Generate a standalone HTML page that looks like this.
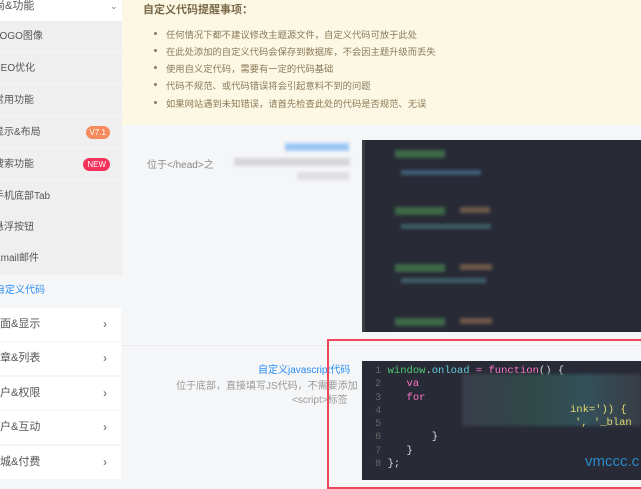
<!DOCTYPE html>
<html><head><meta charset="utf-8"><style>
*{margin:0;padding:0;box-sizing:border-box}
body{width:641px;height:480px;overflow:hidden;position:relative;background:#f5f6f8;font-family:"Liberation Sans","Noto Sans CJK SC",sans-serif;font-size:10px;color:#555}
.abs{position:absolute}
.side{left:0;top:0;width:122px;height:480px;background:#f5f6f8;overflow:hidden}
.sub{position:absolute;left:0;width:122px;height:31px;background:#efeff0;color:#555;font-size:10px;line-height:31px;text-indent:-6px}
.m{position:absolute;left:0;width:121px;height:33px;background:#fff;font-size:11px;color:#555;line-height:33px;text-indent:-11px}
.m:after{content:"›";position:absolute;right:7px;top:0;font-size:12px;font-weight:bold;color:#888}
.badge{position:absolute;right:12px;top:9px;height:13px;line-height:13px;padding:0 4px;border-radius:7px;color:#fff;font-size:8px;text-indent:0}
.notice{left:122px;top:0;width:519px;height:125px;background:#fdf8e4;color:#8a7a5a}
.notice h4{position:absolute;left:21px;top:1px;font-size:11px;color:#7a6a4a;font-weight:bold}
.notice li{position:absolute;left:44px;font-size:9.3px;list-style:none;white-space:nowrap}
.notice li:before{content:"";position:absolute;left:-12px;top:5px;width:3px;height:3px;background:#8a7a5a;border-radius:50%}
.code{background:#282a36}
.blur{filter:blur(1.5px)}
.mono{font-family:"Liberation Mono",monospace;font-size:10.5px;line-height:13.3px}
</style></head><body>
<div class="abs side">
 <div class="abs" style="left:0;top:0;width:122px;height:21px;background:#fff;font-size:11px;line-height:12px;color:#555;text-indent:-6px">尚&amp;功能<span class="abs" style="left:110px;top:0;font-size:9px;text-indent:0;color:#777">⌄</span></div>
 <div class="sub" style="top:21px">LOGO图像</div>
 <div class="sub" style="top:53px">SEO优化</div>
 <div class="sub" style="top:85px">常用功能</div>
 <div class="sub" style="top:117px">显示&amp;布局<span class="badge" style="background:#f78a5c">V7.1</span></div>
 <div class="sub" style="top:149px">搜索功能<span class="badge" style="background:#f5325c">NEW</span></div>
 <div class="sub" style="top:181px">手机底部Tab</div>
 <div class="sub" style="top:212px">悬浮按钮</div>
 <div class="sub" style="top:243px;height:32px">Email邮件</div>
 <div class="abs" style="left:0;top:275px;width:122px;height:32px;line-height:32px;color:#2a8cf0;font-size:10px;text-indent:-5px">自定义代码</div>
 <div class="m" style="top:308px">页面&amp;显示</div>
 <div class="m" style="top:342px">文章&amp;列表</div>
 <div class="m" style="top:377px">用户&amp;权限</div>
 <div class="m" style="top:411px">用户&amp;互动</div>
 <div class="m" style="top:446px">商城&amp;付费</div>
</div>
<div class="abs notice">
 <h4>自定义代码提醒事项：</h4>
 <ul>
 <li style="top:27px">任何情况下都不建议修改主题源文件，自定义代码可放于此处</li>
 <li style="top:44px">在此处添加的自定义代码会保存到数据库，不会因主题升级而丢失</li>
 <li style="top:61px">使用自义定代码，需要有一定的代码基础</li>
 <li style="top:78px">代码不规范、或代码错误将会引起意料不到的问题</li>
 <li style="top:96px">如果网站遇到未知错误，请首先检查此处的代码是否规范、无误</li>
 </ul>
</div>
<div class="abs blur" style="left:285px;top:143px;width:64px;height:8px;background:#9cc8f5"></div>
<div class="abs" style="left:147px;top:156px;font-size:10px;color:#888">位于&lt;/head&gt;之</div>
<div class="abs blur" style="left:234px;top:158px;width:116px;height:8px;background:#d6d6d8"></div>
<div class="abs blur" style="left:297px;top:172px;width:52px;height:8px;background:#dedee0"></div>
<div class="abs code" style="left:362px;top:140px;width:279px;height:192px;border-left:3px solid #3a3c46">
 <div class="blur" style="position:absolute;left:30px;top:10px;width:50px;height:8px;background:#3e6a48"></div>
 <div class="blur" style="position:absolute;left:36px;top:30px;width:80px;height:5px;background:#3f5e78"></div>
 <div class="blur" style="position:absolute;left:30px;top:67px;width:50px;height:8px;background:#3e6a48"></div>
 <div class="blur" style="position:absolute;left:95px;top:67px;width:30px;height:6px;background:#6e5a4a"></div>
 <div class="blur" style="position:absolute;left:36px;top:84px;width:90px;height:5px;background:#3f5e68"></div>
 <div class="blur" style="position:absolute;left:30px;top:124px;width:50px;height:8px;background:#3e6a48"></div>
 <div class="blur" style="position:absolute;left:95px;top:124px;width:32px;height:6px;background:#6e5a4a"></div>
 <div class="blur" style="position:absolute;left:36px;top:138px;width:85px;height:5px;background:#3f5e68"></div>
 <div class="blur" style="position:absolute;left:30px;top:178px;width:50px;height:8px;background:#3e6a48"></div>
 <div class="blur" style="position:absolute;left:95px;top:178px;width:32px;height:6px;background:#6e5a4a"></div>
</div>
<div class="abs" style="left:122px;top:345px;width:519px;height:1px;background:#ebebed"></div>
<div class="abs" style="left:258px;top:361px;font-size:10px;color:#2a8cf0">自定义javascript代码</div>
<div class="abs" style="left:176px;top:377px;font-size:10px;color:#999">位于底部，直接填写JS代码，不需要添加</div>
<div class="abs" style="left:292px;top:391px;font-size:10px;color:#999">&lt;script&gt;标签</div>
<div class="abs code mono" style="left:362px;top:361px;width:279px;height:119px;padding:4px 0 0 13px;color:#ddd">
<div><span style="color:#666">1</span> <span style="color:#50c878">window</span>.<span style="color:#6cd">onload</span> <span style="color:#f7c">=</span> <span style="color:#f7c">function</span>() {</div>
<div><span style="color:#666">2</span> &nbsp;&nbsp;&nbsp;<span style="color:#f7c">va</span></div>
<div><span style="color:#666">3</span> &nbsp;&nbsp;&nbsp;<span style="color:#f7c">for</span></div>
<div><span style="color:#666">4</span></div>
<div><span style="color:#666">5</span></div>
<div><span style="color:#666">6</span> &nbsp;&nbsp;&nbsp;&nbsp;&nbsp;&nbsp;&nbsp;}</div>
<div><span style="color:#666">7</span> &nbsp;&nbsp;&nbsp;}</div>
<div><span style="color:#666">8</span> };</div>
<div class="blur" style="position:absolute;left:100px;top:13px;width:180px;height:52px;background:linear-gradient(90deg,#3a3e4a,#2f4a48 40%,#34505a 70%,#3a3c44)"></div>
<div style="position:absolute;left:208px;top:43px;color:#e6db74">ink=')) {</div>
<div style="position:absolute;left:213px;top:56px;color:#e6db74">', '_blan</div>
<div style="position:absolute;left:223px;top:94px;font-family:'Liberation Sans',sans-serif;font-size:15px;color:#2a8ac8">vmccc.c</div>
</div>
<div class="abs" style="left:327px;top:339px;width:320px;height:150px;border:2px solid #f0455a"></div>
</body></html>
